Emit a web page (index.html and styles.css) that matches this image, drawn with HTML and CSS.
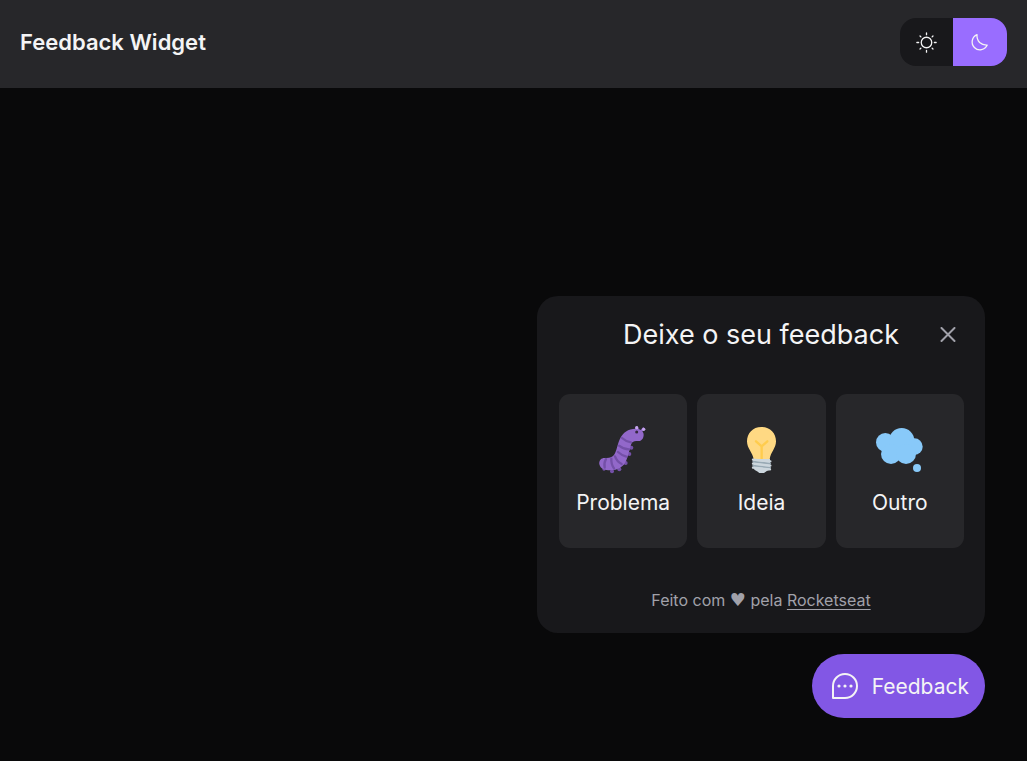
FILE: index.html
```html
<!DOCTYPE html>
<html lang="pt-BR">
<head>
<meta charset="utf-8">
<meta name="viewport" content="width=device-width, initial-scale=1">
<title>Feedback Widget</title>
<link rel="stylesheet" href="styles.css">
</head>
<body>
<header class="topbar">
  <h1 class="brand">Feedback Widget</h1>
  <div class="theme" role="group" aria-label="Tema">
    <button class="theme-option" type="button" aria-label="Tema claro">
      <svg class="theme-icon" viewBox="0 0 24 24" fill="none" stroke="currentColor" stroke-width="1.5" stroke-linecap="round"><circle cx="12" cy="12" r="6"/><path d="M12 1v2M12 21v2M1 12h2M21 12h2M4.600 4.600l1 1M18.400 18.400l1 1M4.600 19.400l1-1M18.400 5.600l1-1"/></svg>
    </button>
    <button class="theme-option theme-option-active" type="button" aria-label="Tema escuro" aria-pressed="true">
      <svg class="theme-icon" viewBox="1 0 24 24" fill="none" stroke="currentColor" stroke-width="1.5" stroke-linejoin="round"><path d="M9 3Q8.600 8.500 12 12Q15.500 15.200 20.700 14.900A9 9 0 1 1 9 3Z"/></svg>
    </button>
  </div>
</header>
<main class="widget">
  <section class="panel" aria-labelledby="panel-title">
    <header class="panel-head">
      <h2 class="panel-title" id="panel-title">Deixe o seu feedback</h2>
      <button class="close" type="button" aria-label="Fechar">
        <svg class="close-icon" viewBox="0 0 16 16" fill="none" stroke="currentColor" stroke-width="2" stroke-linecap="round"><path d="M1.500 1l13 13M14.500 1l-13 13"/></svg>
      </button>
    </header>
    <div class="choices">
      <button class="choice" type="button">
        <svg class="choice-icon" viewBox="27 33 144 144">
          <g fill="none" stroke="#9268ca" stroke-linecap="round"><path stroke-width="6" d="M141 37l4 10M160 40l-7 9"/></g>
          <g fill="#7450a8"><circle cx="66" cy="169" r="6"/><circle cx="88" cy="163" r="6"/><circle cx="107" cy="144" r="6"/><circle cx="118" cy="117" r="6"/><circle cx="124" cy="98" r="6"/><circle cx="42" cy="162" r="5"/></g>
          <path fill="#9268ca" d="M47 129C34 127 26 136 28 148C31 162 45 166 60 166C84 166 101 156 109 136C115 120 119 101 124 86Q129 76 143 78C154 79 161 71 161 59C161 47 149 41 137 41C114 41 99 53 91 69C82 86 81 107 72 120Q64 130 47 129Z"/>
          <path fill="none" stroke="#7450a8" stroke-width="7" stroke-linecap="round" d="M48 132Q41 144 44 158M64 131Q63 148 72 160M75 124Q81 140 95 147M84 111Q95 121 109 125M87 92Q101 103 117 103M96 69Q108 80 123 82"/>
          <circle fill="#35283f" cx="140" cy="51" r="4.500"/>
          <g fill="#c5a5ed"><circle cx="140" cy="38" r="5"/><circle cx="161" cy="43" r="5"/></g>
        </svg>
        <span>Problema</span>
      </button>
      <button class="choice" type="button">
        <svg class="choice-icon" viewBox="21 33 144 144">
          <path fill="#ffd983" d="M94 36C68 36 51 55 51 79C51 101 68 112 71 133H119C122 111 138 100 138 79C138 54 120 36 94 36Z"/>
          <path fill="none" stroke="#ffcc4d" stroke-width="7" stroke-linecap="round" stroke-linejoin="round" d="M78 79L95 94L112 79M95 94V135"/>
          <path fill="#ccd6dd" d="M69 132H120V164Q110 167 102 174H88Q84 169 73 164Z"/>
          <path fill="none" stroke="#99aab5" stroke-width="6" stroke-linecap="round" d="M70 140L120 146M70 152L120 158"/>
          <path fill="none" stroke="#ccd6dd" stroke-width="7" stroke-linecap="round" d="M69 134L121 139M69 146L121 152M69 158L120 163"/>
        </svg>
        <span>Ideia</span>
      </button>
      <button class="choice" type="button">
        <svg class="choice-icon" viewBox="30 33 144 144" fill="#88c9f9">
          <circle cx="58" cy="82" r="28"/><circle cx="107" cy="77" r="38"/><circle cx="145" cy="95" r="25"/><circle cx="75" cy="117" r="30"/><circle cx="120" cy="117" r="30"/><circle cx="153" cy="159" r="12"/>
        </svg>
        <span>Outro</span>
      </button>
    </div>
    <footer class="credit">Feito com <span class="heart">♥</span> pela <a class="credit-link" href="#">Rocketseat</a></footer>
  </section>
  <button class="trigger" type="button">
    <svg class="trigger-icon" viewBox="0 0 32 32" fill="none" stroke="currentColor" stroke-width="2"><path stroke-linejoin="round" d="M4 28V16A12 12 0 1 1 16 28Z"/><g fill="currentColor" stroke="none"><circle cx="10" cy="16" r="1.600"/><circle cx="16" cy="16" r="1.600"/><circle cx="22" cy="16" r="1.600"/></g></svg>
    <span>Feedback</span>
  </button>
</main>
</body>
</html>
```
FILE: styles.css
```css
* {
  box-sizing: border-box;
}

body {
  margin: 0;
  min-height: 100vh;
  display: flex;
  flex-direction: column;
  background: #09090a;
  color: #f4f4f5;
  font-family: Inter, "Liberation Sans", sans-serif;
}

button {
  border: 0;
  padding: 0;
  background: none;
  color: inherit;
  font: inherit;
  cursor: pointer;
}

svg {
  display: block;
}

.topbar {
  display: flex;
  align-items: flex-start;
  justify-content: space-between;
  padding: 18px 20px 22px;
  background: #27272a;
}

.brand {
  margin: 0;
  font-size: 22px;
  line-height: 48px;
  font-weight: 600;
}

.theme {
  display: flex;
  overflow: hidden;
  border-radius: 16px;
  background: #18181b;
}

.theme-option {
  display: grid;
  place-items: center;
  width: 53px;
  height: 48px;
}

.theme-option-active {
  width: 54px;
  background: #996dff;
}

.theme-icon {
  width: 21px;
  height: 21px;
}

.widget {
  display: flex;
  flex-direction: column;
  align-items: flex-end;
  gap: 21px;
  margin-top: auto;
  padding: 0 42px 43px;
}

.panel {
  width: 448px;
  max-width: 100%;
  padding: 21px;
  border-radius: 21px;
  background: #18181b;
}

.panel-head {
  display: grid;
  grid-template-columns: 1fr auto 1fr;
  align-items: center;
}

.panel-title {
  grid-column: 2;
  margin: 0;
  font-size: 27px;
  line-height: 36px;
  font-weight: 400;
}

.close {
  justify-self: end;
  padding: 8px;
  color: #a1a1aa;
}

.close-icon {
  width: 16px;
  height: 16px;
}

.choices {
  display: grid;
  grid-template-columns: repeat(3, 1fr);
  gap: 10px;
  padding: 41px 0 42px 1px;
}

.choice {
  display: flex;
  flex-direction: column;
  align-items: center;
  gap: 13px;
  padding: 32px 0 29px;
  border-radius: 11px;
  background: #27272a;
  font-size: 21px;
  line-height: 32px;
}

.choice-icon {
  width: 48px;
  height: 48px;
}

.credit {
  padding-bottom: 1px;
  text-align: center;
  font-size: 16px;
  line-height: 21px;
  color: #a1a1aa;
}

.heart {
  font-family: "DejaVu Sans", sans-serif;
  font-size: 18px;
  line-height: 1;
}

.credit-link {
  color: inherit;
  text-decoration: underline;
  text-underline-offset: 3px;
}

.trigger {
  display: flex;
  align-items: center;
  gap: 11px;
  height: 64px;
  padding: 0 16px 0 17px;
  border-radius: 32px;
  background: #8257e5;
  font-size: 21px;
}

.trigger-icon {
  width: 32px;
  height: 32px;
}
```
